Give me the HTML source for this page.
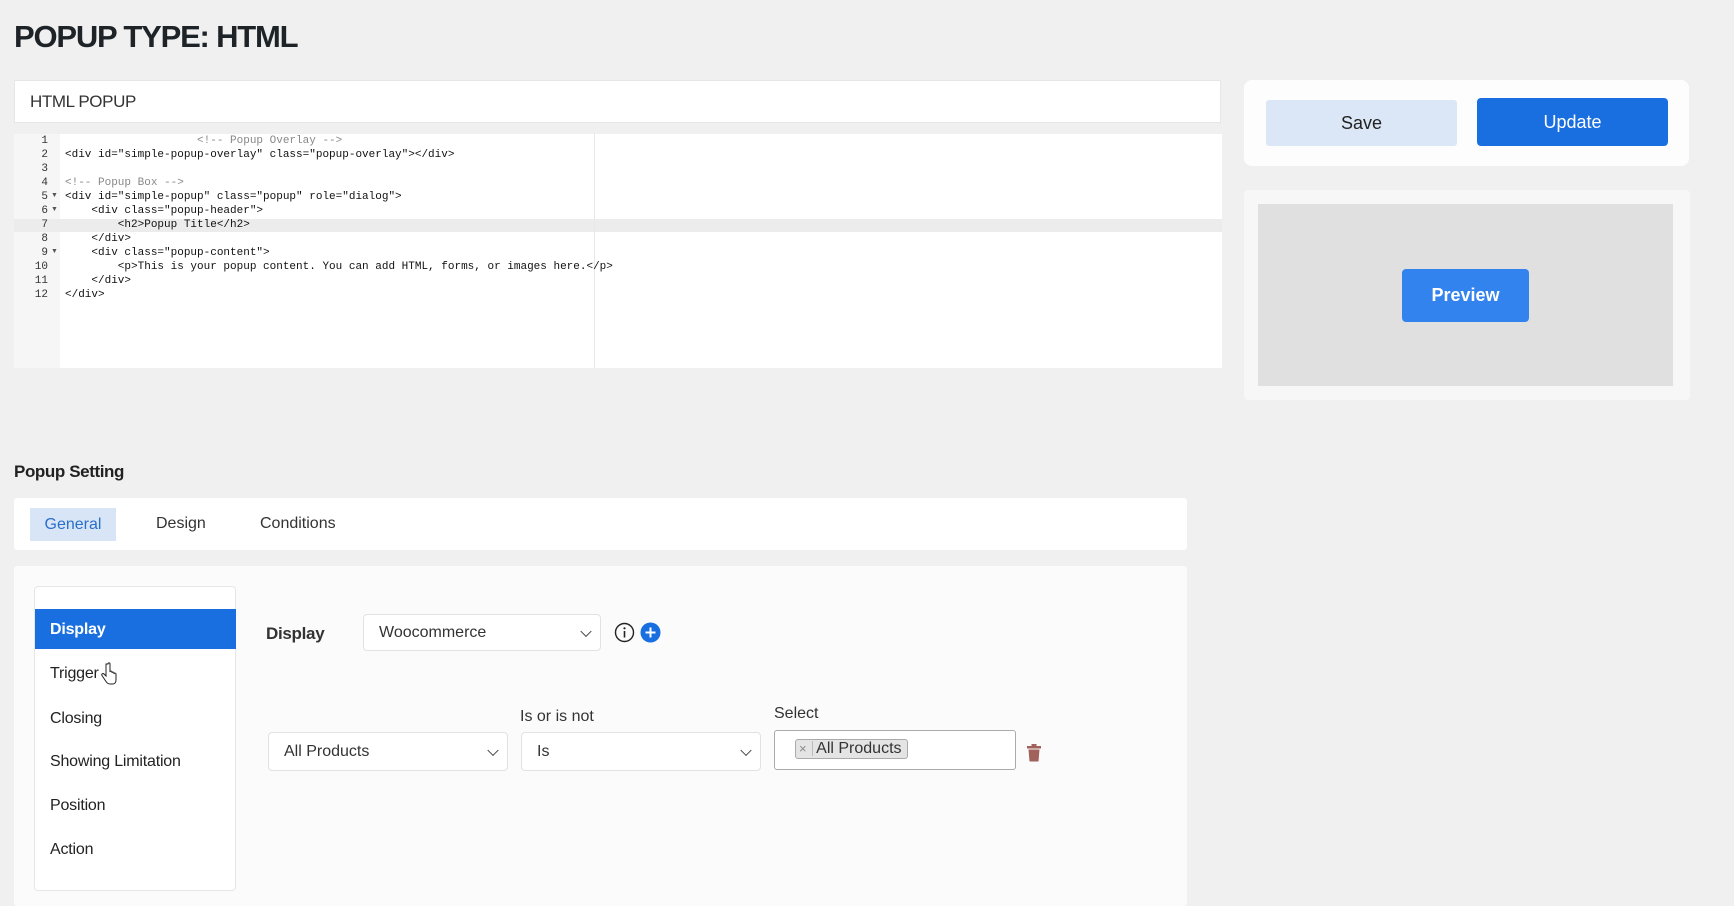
<!DOCTYPE html>
<html><head><meta charset="utf-8"><style>
*{box-sizing:border-box;margin:0;padding:0}
body{width:1734px;height:900px;background:#f0f0f0;font-family:"Liberation Sans",sans-serif;color:#222;position:relative;overflow:hidden}
.a{position:absolute}
.code{font-family:"Liberation Mono",monospace;font-size:11px;letter-spacing:0;white-space:pre;line-height:14px;color:#111}
.gn{font-family:"Liberation Mono",monospace;font-size:11px;line-height:14px;text-align:right;color:#333}
.cm{color:#888}
.sel{background:#fff;border:1px solid #e2e2e2;border-radius:4px;font-size:16px;color:#333;display:flex;align-items:center;padding-left:15px}
.chev{position:absolute;right:10px;top:50%;width:8px;height:8px;border-right:1.6px solid #444;border-bottom:1.6px solid #444;transform:translateY(-70%) rotate(45deg)}
.item{position:absolute;left:50px;font-size:16px;color:#222;letter-spacing:-.2px}
.fold{position:absolute;left:51px;font-size:7px;color:#555}
</style></head><body>
<div class="a" style="left:14px;top:19px;font-size:31px;font-weight:700;color:#1d2327;letter-spacing:-1.2px">POPUP TYPE: HTML</div>
<div class="a" style="left:14px;top:80px;width:1207px;height:43px;background:#fff;border:1px solid #e6e6e6;font-size:17px;color:#333;padding:11px 15px;letter-spacing:-.4px">HTML POPUP</div>
<div class="a" style="left:14px;top:134px;width:1208px;height:234px;background:#fff"></div>
<div class="a" style="left:14px;top:134px;width:46px;height:234px;background:#f6f6f6"></div>
<div class="a" style="left:14px;top:219px;width:1208px;height:13px;background:#ececec"></div>
<div class="a" style="left:594px;top:134px;width:1px;height:234px;background:#e8e8e8"></div>
<div class="a gn" style="left:14px;top:134px;width:34px">1<br>2<br>3<br>4<br>5<br>6<br>7<br>8<br>9<br>10<br>11<br>12</div>
<div class="fold" style="top:192px">▼</div><div class="fold" style="top:206px">▼</div><div class="fold" style="top:248px">▼</div>
<div class="a code" style="left:65px;top:134px"><span class="cm">                    &lt;!-- Popup Overlay --&gt;</span>
&lt;div id="simple-popup-overlay" class="popup-overlay"&gt;&lt;/div&gt;

<span class="cm">&lt;!-- Popup Box --&gt;</span>
&lt;div id="simple-popup" class="popup" role="dialog"&gt;
    &lt;div class="popup-header"&gt;
        &lt;h2&gt;Popup Title&lt;/h2&gt;
    &lt;/div&gt;
    &lt;div class="popup-content"&gt;
        &lt;p&gt;This is your popup content. You can add HTML, forms, or images here.&lt;/p&gt;
    &lt;/div&gt;
&lt;/div&gt;</div>

<div class="a" style="left:1244px;top:80px;width:445px;height:86px;background:#fdfdfd;border-radius:8px"></div>
<div class="a" style="left:1266px;top:100px;width:191px;height:46px;background:#dbe6f6;border-radius:3px;font-size:18px;display:flex;align-items:center;justify-content:center;color:#222">Save</div>
<div class="a" style="left:1477px;top:98px;width:191px;height:48px;background:#1a6fe0;border-radius:4px;font-size:18px;display:flex;align-items:center;justify-content:center;color:#fff">Update</div>
<div class="a" style="left:1244px;top:190px;width:446px;height:210px;background:#f7f7f7;border-radius:4px"></div>
<div class="a" style="left:1258px;top:204px;width:415px;height:182px;background:#e0e0e0"></div>
<div class="a" style="left:1402px;top:269px;width:127px;height:53px;background:#3383ee;border-radius:4px;font-size:18px;font-weight:700;display:flex;align-items:center;justify-content:center;color:#fff">Preview</div>

<div class="a" style="left:14px;top:462px;font-size:17px;font-weight:700;color:#222;letter-spacing:-.4px">Popup Setting</div>
<div class="a" style="left:14px;top:498px;width:1173px;height:52px;background:#fff;border-radius:3px"></div>
<div class="a" style="left:30px;top:508px;width:86px;height:33px;background:#d8e5f7;color:#2a6fc9;font-size:16px;display:flex;align-items:center;justify-content:center">General</div>
<div class="a" style="left:156px;top:515px;font-size:16px;color:#333">Design</div>
<div class="a" style="left:260px;top:515px;font-size:16px;color:#333">Conditions</div>

<div class="a" style="left:14px;top:566px;width:1173px;height:340px;background:#fbfbfb;border-radius:3px"></div>
<div class="a" style="left:34px;top:586px;width:202px;height:305px;background:#fff;border:1px solid #e6e6e6;border-radius:4px"></div>
<div class="a" style="left:35px;top:609px;width:201px;height:40px;background:#1a6fe0"></div>
<div class="item" style="top:621px;color:#fff;font-weight:700">Display</div>
<div class="item" style="top:665px">Trigger</div>
<div class="item" style="top:710px">Closing</div>
<div class="item" style="top:753px">Showing Limitation</div>
<div class="item" style="top:797px">Position</div>
<div class="item" style="top:841px">Action</div>

<div class="a" style="left:266px;top:624px;font-size:17px;font-weight:700;color:#333;letter-spacing:-.3px">Display</div>
<div class="a sel" style="left:363px;top:614px;width:238px;height:37px">Woocommerce<span class="chev"></span></div>
<svg class="a" style="left:614px;top:622px" width="21" height="21" viewBox="0 0 21 21"><circle cx="10.5" cy="10.5" r="9" fill="none" stroke="#222" stroke-width="1.4"/><circle cx="10.5" cy="6.3" r="1.1" fill="#222"/><path d="M10.5 9v6.5" stroke="#222" stroke-width="1.6"/></svg>
<svg class="a" style="left:640px;top:622px" width="21" height="21" viewBox="0 0 21 21"><circle cx="10.5" cy="10.5" r="10" fill="#1a6fe0"/><path d="M10.5 5.5v10M5.5 10.5h10" stroke="#fff" stroke-width="2"/></svg>

<div class="a" style="left:520px;top:708px;font-size:16px;color:#333">Is or is not</div>
<div class="a" style="left:774px;top:705px;font-size:16px;color:#333">Select</div>
<div class="a sel" style="left:268px;top:732px;width:240px;height:39px">All Products<span class="chev"></span></div>
<div class="a sel" style="left:521px;top:732px;width:240px;height:39px">Is<span class="chev"></span></div>
<div class="a" style="left:774px;top:730px;width:242px;height:40px;background:#fff;border:1px solid #aaa;border-radius:3px"></div>
<div class="a" style="left:795px;top:739px;width:113px;height:20px;background:#e4e4e4;border:1px solid #aaa;border-radius:3px;font-size:16px;color:#333;line-height:18px;padding-left:3px"><span style="color:#888;font-size:13px;padding-right:5px;border-right:1px solid #bbb">×</span> All Products</div>
<svg class="a" style="left:1027px;top:744px" width="14" height="18" viewBox="0 0 14 18"><rect x="0" y="2" width="14" height="2.5" fill="#a0625a"/><rect x="4.5" y="0" width="5" height="2.5" fill="#a0625a"/><path d="M1.5 5.5h11l-1 12h-9z" fill="#a0625a"/></svg>
<svg class="a" style="left:100px;top:662px" width="18" height="24" viewBox="0 0 18 24"><path d="M6 2v12l-2-2c-1-1-3 0-2 1.5l4 6c1 1.5 2 2.5 4 2.5h3c2 0 3-2 3-4v-6c0-1-1.5-1.5-2 0v-1c0-1-1.5-1.5-2 0v-1c0-1-1.5-1.5-2 0V2c0-1.5-2-1.5-2 0z" fill="#fff" stroke="#222" stroke-width="1"/></svg>
</body></html>
